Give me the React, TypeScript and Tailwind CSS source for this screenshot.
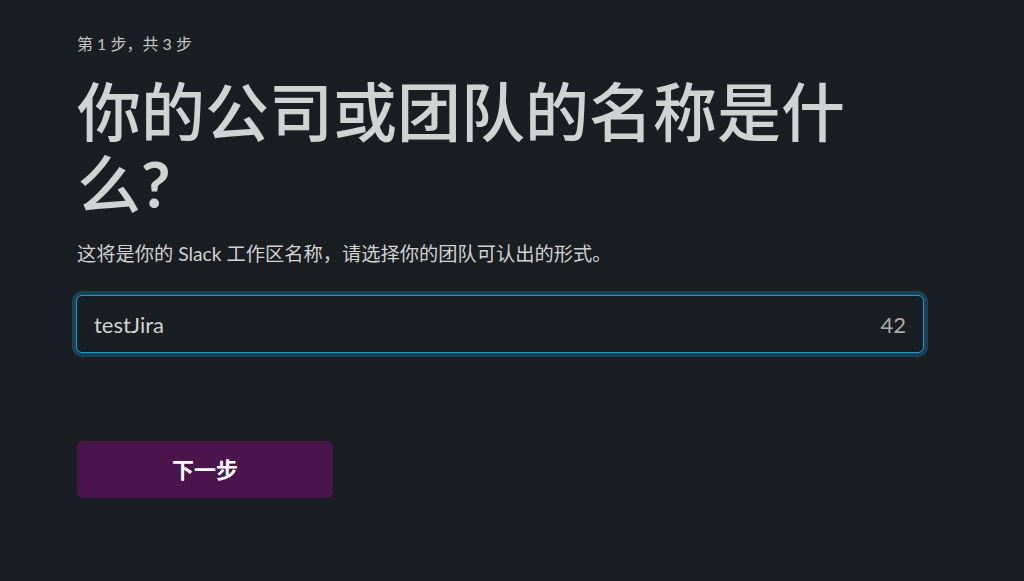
export default function App() {
  const font = { fontFamily: 'Lato, "Noto Sans CJK SC", sans-serif' };

  return (
    <div className="min-h-[581px] w-full bg-[#1a1d21] text-[#d1d2d3]" style={font}>
      <div className="flex w-[847px] flex-col pl-[77px] pt-[33px] box-content">
        <div className="text-[16px] leading-[22px] text-[#c3c4c5]">第 1 步，共 3 步</div>

        <h1 className="mt-[21px] max-w-[800px] text-[64px] font-medium leading-[72px] text-[#d1d2d3]">
          你的公司或团队的名称是什么<span className="font-bold">?</span>
        </h1>

        <p className="mt-[21px] text-[19.25px] leading-[26px] text-[#d1d2d3]">
          这将是你的 Slack 工作区名称，请选择你的团队可认出的形式。
        </p>

        <div className="mt-[28px] flex h-[58px] w-[848px] -ml-px items-center justify-between rounded-[6px] border border-[#1d9bd1] bg-[#1a1d21] px-[17px] shadow-[0_0_0_4px_rgba(29,155,209,0.3)]">
          <span className="text-[22px] text-[#d1d2d3]">testJira</span>
          <span className="text-[22px] text-[#ababad]">42</span>
        </div>

        <button className="mt-[88px] flex h-[57px] w-[256px] items-center justify-center rounded-[6px] bg-[#4a154b] text-[22px] font-bold text-white">
          下一步
        </button>
      </div>
    </div>
  );
}
